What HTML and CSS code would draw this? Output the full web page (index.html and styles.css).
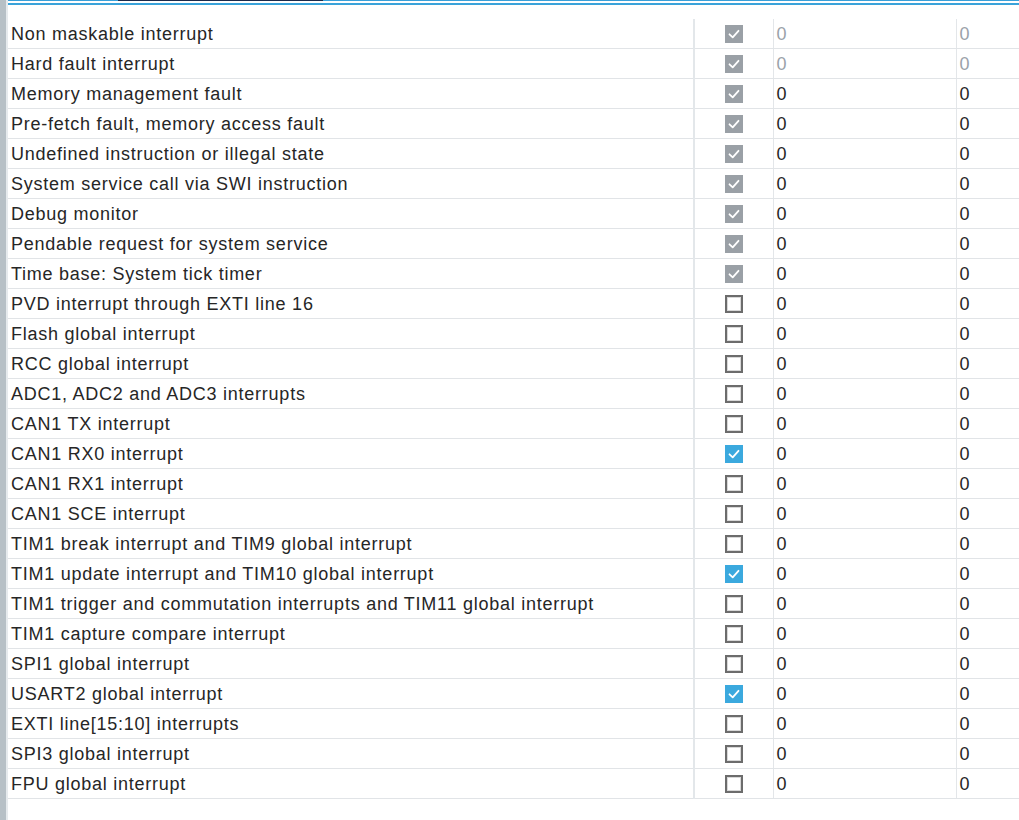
FILE: index.html
```html
<!DOCTYPE html>
<html>
<head>
<meta charset="utf-8">
<link rel="stylesheet" href="styles.css">
</head>
<body>
<div class="frame">
  <div class="side"></div>
  <div class="main">
    <div class="tabline"><div class="tabmark"></div></div>
    <div class="tabline2"></div>
    <table class="grid">
      <colgroup><col class="c1"><col class="c2"><col class="c3"><col class="c4"></colgroup>
      <tbody>
        <tr class="dis"><td class="name">Non maskable interrupt</td><td class="chk"><span class="cb gray"><svg viewBox="0 0 18 18"><path d="M4.5 9.3 L7.7 12.3 L13.5 5.8"/></svg></span></td><td class="num">0</td><td class="num">0</td></tr>
        <tr class="dis"><td class="name">Hard fault interrupt</td><td class="chk"><span class="cb gray"><svg viewBox="0 0 18 18"><path d="M4.5 9.3 L7.7 12.3 L13.5 5.8"/></svg></span></td><td class="num">0</td><td class="num">0</td></tr>
        <tr><td class="name">Memory management fault</td><td class="chk"><span class="cb gray"><svg viewBox="0 0 18 18"><path d="M4.5 9.3 L7.7 12.3 L13.5 5.8"/></svg></span></td><td class="num">0</td><td class="num">0</td></tr>
        <tr><td class="name">Pre-fetch fault, memory access fault</td><td class="chk"><span class="cb gray"><svg viewBox="0 0 18 18"><path d="M4.5 9.3 L7.7 12.3 L13.5 5.8"/></svg></span></td><td class="num">0</td><td class="num">0</td></tr>
        <tr><td class="name">Undefined instruction or illegal state</td><td class="chk"><span class="cb gray"><svg viewBox="0 0 18 18"><path d="M4.5 9.3 L7.7 12.3 L13.5 5.8"/></svg></span></td><td class="num">0</td><td class="num">0</td></tr>
        <tr><td class="name">System service call via SWI instruction</td><td class="chk"><span class="cb gray"><svg viewBox="0 0 18 18"><path d="M4.5 9.3 L7.7 12.3 L13.5 5.8"/></svg></span></td><td class="num">0</td><td class="num">0</td></tr>
        <tr><td class="name">Debug monitor</td><td class="chk"><span class="cb gray"><svg viewBox="0 0 18 18"><path d="M4.5 9.3 L7.7 12.3 L13.5 5.8"/></svg></span></td><td class="num">0</td><td class="num">0</td></tr>
        <tr><td class="name">Pendable request for system service</td><td class="chk"><span class="cb gray"><svg viewBox="0 0 18 18"><path d="M4.5 9.3 L7.7 12.3 L13.5 5.8"/></svg></span></td><td class="num">0</td><td class="num">0</td></tr>
        <tr><td class="name">Time base: System tick timer</td><td class="chk"><span class="cb gray"><svg viewBox="0 0 18 18"><path d="M4.5 9.3 L7.7 12.3 L13.5 5.8"/></svg></span></td><td class="num">0</td><td class="num">0</td></tr>
        <tr><td class="name">PVD interrupt through EXTI line 16</td><td class="chk"><span class="cb empty"></span></td><td class="num">0</td><td class="num">0</td></tr>
        <tr><td class="name">Flash global interrupt</td><td class="chk"><span class="cb empty"></span></td><td class="num">0</td><td class="num">0</td></tr>
        <tr><td class="name">RCC global interrupt</td><td class="chk"><span class="cb empty"></span></td><td class="num">0</td><td class="num">0</td></tr>
        <tr><td class="name">ADC1, ADC2 and ADC3 interrupts</td><td class="chk"><span class="cb empty"></span></td><td class="num">0</td><td class="num">0</td></tr>
        <tr><td class="name">CAN1 TX interrupt</td><td class="chk"><span class="cb empty"></span></td><td class="num">0</td><td class="num">0</td></tr>
        <tr><td class="name">CAN1 RX0 interrupt</td><td class="chk"><span class="cb blue"><svg viewBox="0 0 18 18"><path d="M4.5 9.3 L7.7 12.3 L13.5 5.8"/></svg></span></td><td class="num">0</td><td class="num">0</td></tr>
        <tr><td class="name">CAN1 RX1 interrupt</td><td class="chk"><span class="cb empty"></span></td><td class="num">0</td><td class="num">0</td></tr>
        <tr><td class="name">CAN1 SCE interrupt</td><td class="chk"><span class="cb empty"></span></td><td class="num">0</td><td class="num">0</td></tr>
        <tr><td class="name">TIM1 break interrupt and TIM9 global interrupt</td><td class="chk"><span class="cb empty"></span></td><td class="num">0</td><td class="num">0</td></tr>
        <tr><td class="name">TIM1 update interrupt and TIM10 global interrupt</td><td class="chk"><span class="cb blue"><svg viewBox="0 0 18 18"><path d="M4.5 9.3 L7.7 12.3 L13.5 5.8"/></svg></span></td><td class="num">0</td><td class="num">0</td></tr>
        <tr><td class="name">TIM1 trigger and commutation interrupts and TIM11 global interrupt</td><td class="chk"><span class="cb empty"></span></td><td class="num">0</td><td class="num">0</td></tr>
        <tr><td class="name">TIM1 capture compare interrupt</td><td class="chk"><span class="cb empty"></span></td><td class="num">0</td><td class="num">0</td></tr>
        <tr><td class="name">SPI1 global interrupt</td><td class="chk"><span class="cb empty"></span></td><td class="num">0</td><td class="num">0</td></tr>
        <tr><td class="name">USART2 global interrupt</td><td class="chk"><span class="cb blue"><svg viewBox="0 0 18 18"><path d="M4.5 9.3 L7.7 12.3 L13.5 5.8"/></svg></span></td><td class="num">0</td><td class="num">0</td></tr>
        <tr><td class="name">EXTI line[15:10] interrupts</td><td class="chk"><span class="cb empty"></span></td><td class="num">0</td><td class="num">0</td></tr>
        <tr><td class="name">SPI3 global interrupt</td><td class="chk"><span class="cb empty"></span></td><td class="num">0</td><td class="num">0</td></tr>
        <tr><td class="name">FPU global interrupt</td><td class="chk"><span class="cb empty"></span></td><td class="num">0</td><td class="num">0</td></tr>
      </tbody>
    </table>
  </div>
</div>
</body>
</html>
```

FILE: styles.css
```css
html, body {
  margin: 0;
  padding: 0;
  background: #ffffff;
}
.frame {
  display: flex;
  height: 820px;
  overflow: hidden;
}
.side {
  width: 6px;
  flex: none;
  background: #b7c0c6;
  border-right: 2px solid #e6eaed;
}
.main {
  flex: 1;
  min-width: 0;
}
.tabline {
  height: 1px;
  background: #3aa0d8;
  position: relative;
}
.tabmark {
  position: absolute;
  left: 110px;
  width: 205px;
  top: 0;
  height: 1px;
  background: #1c2a4a;
}
.tabline2 {
  margin-top: 2px;
  height: 2px;
  background: #3aa3da;
}
.grid {
  margin-top: 14px;
  border-collapse: collapse;
  table-layout: fixed;
  width: 1030px;
  font-family: "Liberation Sans", Arial, sans-serif;
  font-size: 18px;
  letter-spacing: 0.75px;
  color: #262626;
}
.c1 { width: 686px; }
.c2 { width: 79px; }
.c3 { width: 183px; }
.c4 { width: auto; }
.grid td {
  padding: 2px 0 0 0;
  line-height: 27px;
  border-bottom: 1px solid #e1e4e7;
  white-space: nowrap;
  vertical-align: middle;
}
.grid td.name {
  padding-left: 3px;
  border-right: 2px solid #e3e7ea;
}
.grid td.chk {
  padding: 0;
  text-align: center;
  border-right: 1px solid #e3e6e9;
  line-height: 0;
}
.grid td.num {
  padding-left: 3px;
  border-right: 1px solid #e3e6e9;
}
.grid tr.dis td.num {
  color: #9ba2a9;
}
.cb {
  display: inline-block;
  width: 18px;
  height: 18px;
  box-sizing: border-box;
  vertical-align: middle;
}
.cb svg {
  width: 18px;
  height: 18px;
  display: block;
}
.cb path {
  fill: none;
  stroke: #ffffff;
  stroke-width: 1.8;
  stroke-linecap: round;
  stroke-linejoin: round;
}
.cb.gray { background: #9aa0a6; }
.cb.blue { background: #3ba9de; }
.cb.empty {
  border: 2px solid #6c6c6c;
  background: #ffffff;
  box-shadow: inset 0 0 0 1px #d8d8d8;
}
```
